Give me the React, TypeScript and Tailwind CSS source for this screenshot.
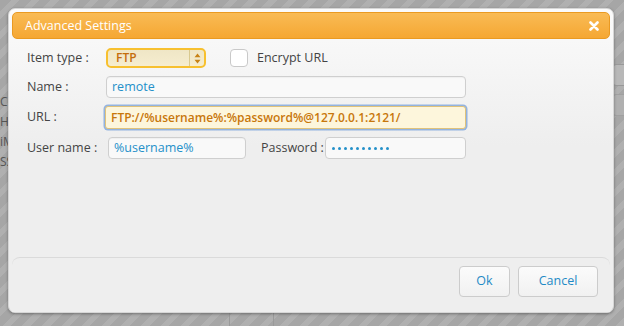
const font = { fontFamily: '"Open Sans", "DejaVu Sans", sans-serif' };

function Field({ value, className = "" }: { value: string; className?: string }) {
  return (
    <div
      className={`flex h-[22px] items-center rounded-[4px] border border-[#cfcfcf] bg-[#f9f9f9] px-[5px] text-[12.5px] text-[#2490c9] shadow-[inset_0_1px_1px_rgba(0,0,0,0.04)] ${className}`}
    >
      {value}
    </div>
  );
}

export default function App() {
  return (
    <div
      className="relative h-[326px] w-[624px] overflow-hidden bg-[#a9a9a9] bg-[repeating-linear-gradient(135deg,#a6a6a6_0px,#a6a6a6_8px,#b0b0b0_8px,#b0b0b0_14px)] pl-[8px] pt-[8px]"
      style={font}
    >
      {/* stuff behind the modal */}
      <div className="absolute left-0 top-[94px] flex flex-col gap-[5px] text-[12px] leading-[15px] text-[#555]">
        <span>Cr</span>
        <span>HD</span>
        <span>iM</span>
        <span>SS</span>
      </div>
      <div className="absolute left-[612px] top-[64px] h-[22px] w-[20px] rounded-[4px] border border-[#999] bg-[#b8b8b8]" />
      <div className="absolute left-[612px] top-[94px] h-[22px] w-[20px] rounded-[4px] border border-[#a0a0a0] bg-[#b0b0b0]" />
      <div className="absolute left-[229px] top-[313px] h-[13px] w-px bg-[#9a9a9a]" />
      <div className="absolute left-[273px] top-[313px] h-[13px] w-px bg-[#9a9a9a]" />

      <div className="relative flex h-[305px] w-[606px] flex-col rounded-[7px] border border-[#d6d6d6] bg-[linear-gradient(#fbfbfb,#eeeeee_45%)] p-[3px] pb-0 shadow-[0_1px_3px_rgba(0,0,0,0.35)]">
        <div className="flex h-[27px] items-center justify-between rounded-[5px] border border-[#ea9a22] bg-[linear-gradient(#f9bb55,#f5a733)] pl-[12px] pr-[10px] text-[12.5px] text-white">
          <span className="pt-[2px]">Advanced Settings</span>
          <svg width="10" height="10" viewBox="0 0 10 10">
            <path d="M1.5 1.5 L8.5 8.5 M8.5 1.5 L1.5 8.5" stroke="white" strokeWidth="2.6" strokeLinecap="round" />
          </svg>
        </div>

        <div className="flex flex-1 flex-col gap-[8px] pl-[15px] pr-[144px] pt-[9px] text-[12.5px] text-[#444]">
          <div className="flex h-[20px] items-center">
            <span className="w-[79px] shrink-0 whitespace-nowrap">Item type :</span>
            <div className="flex h-[20px] w-[100px] items-center rounded-[5px] border-2 border-[#f7c02f] bg-[linear-gradient(#efe6c6,#f6edcf)] text-[12px] font-semibold text-[#c46d0b]">
              <span className="flex-1 pl-[8px]">FTP</span>
              <div className="flex h-full w-[15px] items-center justify-center border-l border-[#d9c98f]">
                <svg width="7" height="11" viewBox="0 0 7 11">
                  <path d="M3.5 0.5 L6.5 4.2 L0.5 4.2 Z M3.5 10.5 L6.5 6.8 L0.5 6.8 Z" fill="#c88316" />
                </svg>
              </div>
            </div>
            <div className="ml-[24px] h-[18px] w-[18px] rounded-[4px] border border-[#c9c9c9] bg-white" />
            <span className="ml-[9px] whitespace-nowrap">Encrypt URL</span>
          </div>

          <div className="flex items-center">
            <span className="w-[79px] shrink-0 whitespace-nowrap">Name :</span>
            <Field value="remote" className="flex-1" />
          </div>

          <div className="flex items-center">
            <span className="w-[78px] shrink-0 whitespace-nowrap">URL :</span>
            <div className="flex h-[23px] flex-1 items-center rounded-[3px] border border-[#e0c27a] bg-[#fdf6dc] px-[5px] text-[12px] font-semibold text-[#c8770b] shadow-[0_0_0_1.5px_#93b3df]">
              FTP://%username%:%password%@127.0.0.1:2121/
            </div>
          </div>

          <div className="flex items-center">
            <span className="w-[81px] shrink-0 whitespace-nowrap">User name :</span>
            <Field value="%username%" className="w-[138px] shrink-0" />
            <span className="ml-[15px] w-[64px] shrink-0 whitespace-nowrap">Password :</span>
            <div className="flex h-[22px] flex-1 items-center gap-[3px] rounded-[4px] border border-[#cfcfcf] bg-[#f9f9f9] px-[6px]">
              {Array.from({ length: 10 }).map((_, i) => (
                <span key={i} className="h-[3px] w-[3px] rounded-full bg-[#2490c9]" />
              ))}
            </div>
          </div>
        </div>

        <div className="flex h-[55px] items-start justify-end gap-[8px] rounded-t-[8px] border-t border-[#dadada] bg-[#eeeeee] pr-[12px] pt-[8px]">
          <button className="h-[31px] w-[51px] rounded-[4px] border border-[#cccccc] bg-[linear-gradient(#fbfbfb,#f1f1f1)] text-[12.5px] text-[#1f8ac6]">
            Ok
          </button>
          <button className="h-[31px] w-[80px] rounded-[4px] border border-[#cccccc] bg-[linear-gradient(#fbfbfb,#f1f1f1)] text-[12.5px] text-[#1f8ac6]">
            Cancel
          </button>
        </div>
      </div>
    </div>
  );
}
